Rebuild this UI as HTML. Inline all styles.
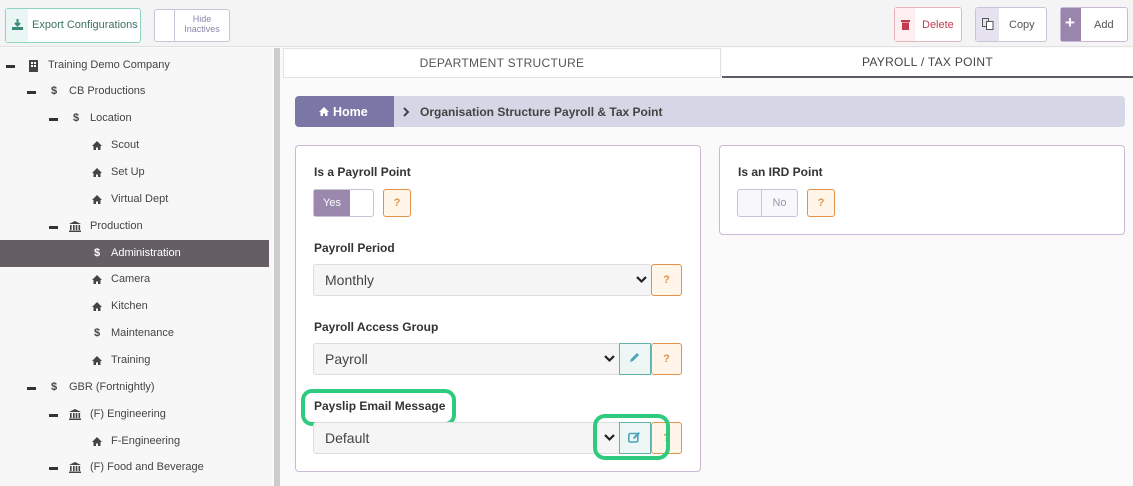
<!DOCTYPE html>
<html><head><meta charset="utf-8"><style>
*{box-sizing:border-box;margin:0;padding:0}
body{width:1133px;height:486px;overflow:hidden;background:#fafafa;font-family:"Liberation Sans",sans-serif;color:#333;position:relative}
.a{position:absolute}
.t{font-size:11px;color:#444;white-space:nowrap}
.lbl{font-size:12px;font-weight:bold;color:#333}
.btn{position:absolute;border-radius:3px;background:#fff}
.q{position:absolute;width:28px;height:28px;border:1px solid #e0924a;background:#fff5e8;border-radius:3px;color:#e0924a;font-weight:bold;font-size:11px;text-align:center;line-height:26px}
.sel{position:absolute;height:32px;border:1px solid #ddd;background:#f5f5f5;border-radius:3px;font-size:14px;color:#444;padding-left:11px;line-height:30px}
.minus{position:absolute;width:9px;height:2.5px;background:#333}
</style></head><body>
<div class="a" style="left:0;top:0;width:1133px;height:47px;background:#f4f4f4;border-bottom:1px solid #e2e2e2"></div>
<div class="btn" style="left:5px;top:8px;width:136px;height:35px;border:1px solid #8fd3c4">
 <div class="a" style="left:0;top:0;width:22px;height:33px;background:#e9f6f3"></div>
 <svg class="a" style="left:6px;top:10px" width="11" height="11" viewBox="0 0 11 11"><path d="M5.5 0v6M3 4l2.5 2.5L8 4" stroke="#3a8a78" stroke-width="2" fill="none"/><rect x="0" y="8" width="11" height="3" fill="#3a8a78"/></svg>
 <div class="a" style="left:26px;top:10px;font-size:11px;color:#3a7266">Export Configurations</div>
</div>
<div class="btn" style="left:154px;top:9px;width:76px;height:33px;border:1px solid #c9c3d6">
 <div class="a" style="left:19px;top:0;width:1px;height:31px;background:#c9c3d6"></div>
 <div class="a" style="left:20px;top:4px;width:54px;text-align:center;font-size:9px;line-height:10px;color:#8a86a8">Hide<br>Inactives</div>
</div>
<div class="btn" style="left:894px;top:7px;width:68px;height:35px;border:1px solid #e8b4bc">
 <div class="a" style="left:0;top:0;width:20px;height:33px;background:#fdeef0"></div>
 <svg class="a" style="left:6px;top:11px" width="9" height="11" viewBox="0 0 9 11"><rect x="0" y="1" width="9" height="2" fill="#c23b4f"/><rect x="1" y="3.5" width="7" height="7.5" fill="#c23b4f"/></svg>
 <div class="a" style="left:27px;top:11px;font-size:11px;color:#c23b4f">Delete</div>
</div>
<div class="btn" style="left:975px;top:7px;width:72px;height:35px;border:1px solid #c9c3d6">
 <div class="a" style="left:0;top:0;width:23px;height:33px;background:#e6e2f0"></div>
 <svg class="a" style="left:6px;top:10px" width="12" height="12" viewBox="0 0 12 12"><rect x="0.5" y="0.5" width="6" height="8" fill="none" stroke="#555" /><rect x="4.5" y="3.5" width="6.5" height="8" fill="#fff" stroke="#555"/></svg>
 <div class="a" style="left:33px;top:11px;font-size:11px;color:#555">Copy</div>
</div>
<div class="btn" style="left:1060px;top:7px;width:68px;height:35px;border:1px solid #c9b8d6">
 <div class="a" style="left:0;top:0;width:20px;height:33px;background:#9a86ad"></div>
 <div class="a" style="left:4px;top:5px;color:#fff;font-weight:bold;font-size:17px">+</div>
 <div class="a" style="left:33px;top:11px;font-size:11px;color:#555">Add</div>
</div>
<div class="a" style="left:0;top:48px;width:272px;height:438px;background:#f7f7f7"></div>
<div class="a" style="left:274px;top:48px;width:6px;height:438px;background:#cdcdcd"></div>
<div class="a" style="left:0;top:240px;width:269px;height:27px;background:#655f64"></div>
<div class="minus" style="left:6px;top:65px"></div>
<svg class="a" style="left:29px;top:60px" width="9" height="12" viewBox="0 0 9 12"><rect width="9" height="12" fill="#444"/><rect x="2" y="2" width="2" height="2" fill="#fff"/><rect x="5" y="2" width="2" height="2" fill="#fff"/><rect x="2" y="5" width="2" height="2" fill="#fff"/><rect x="5" y="5" width="2" height="2" fill="#fff"/></svg>
<div class="a t" style="left:48px;top:59px">Training Demo Company</div>
<div class="minus" style="left:27px;top:91px"></div><div class="a t" style="left:51px;top:85px;font-weight:bold">$</div><div class="a t" style="left:69px;top:85px">CB Productions</div>
<div class="minus" style="left:49px;top:118px"></div><div class="a t" style="left:73px;top:112px;font-weight:bold">$</div><div class="a t" style="left:90px;top:112px">Location</div>
<div class="minus" style="left:49px;top:226px"></div>
<svg class="a" style="left:69px;top:221px" width="12" height="11" viewBox="0 0 12 11"><path d="M0 3L6 0l6 3z" fill="#444"/><rect x="1" y="4" width="1.6" height="5" fill="#444"/><rect x="4" y="4" width="1.6" height="5" fill="#444"/><rect x="6.7" y="4" width="1.6" height="5" fill="#444"/><rect x="9.5" y="4" width="1.6" height="5" fill="#444"/><rect x="0" y="9.5" width="12" height="1.5" fill="#444"/></svg>
<div class="a t" style="left:90px;top:220px">Production</div>
<div class="a t" style="left:94px;top:247px;font-weight:bold;color:#fff">$</div><div class="a t" style="left:111px;top:247px;color:#fff">Administration</div>
<div class="a t" style="left:94px;top:327px;font-weight:bold">$</div><div class="a t" style="left:111px;top:327px">Maintenance</div>
<div class="minus" style="left:27px;top:387px"></div><div class="a t" style="left:51px;top:381px;font-weight:bold">$</div><div class="a t" style="left:69px;top:381px">GBR (Fortnightly)</div>
<div class="minus" style="left:49px;top:414px"></div>
<svg class="a" style="left:69px;top:409px" width="12" height="11" viewBox="0 0 12 11"><path d="M0 3L6 0l6 3z" fill="#444"/><rect x="1" y="4" width="1.6" height="5" fill="#444"/><rect x="4" y="4" width="1.6" height="5" fill="#444"/><rect x="6.7" y="4" width="1.6" height="5" fill="#444"/><rect x="9.5" y="4" width="1.6" height="5" fill="#444"/><rect x="0" y="9.5" width="12" height="1.5" fill="#444"/></svg>
<div class="a t" style="left:90px;top:408px">(F) Engineering</div>
<div class="minus" style="left:49px;top:467px"></div>
<svg class="a" style="left:69px;top:462px" width="12" height="11" viewBox="0 0 12 11"><path d="M0 3L6 0l6 3z" fill="#444"/><rect x="1" y="4" width="1.6" height="5" fill="#444"/><rect x="4" y="4" width="1.6" height="5" fill="#444"/><rect x="6.7" y="4" width="1.6" height="5" fill="#444"/><rect x="9.5" y="4" width="1.6" height="5" fill="#444"/><rect x="0" y="9.5" width="12" height="1.5" fill="#444"/></svg>
<div class="a t" style="left:90px;top:461px">(F) Food and Beverage</div>
<svg width="0" height="0" style="position:absolute"><defs><g id="h"><path d="M0 5L5 0l5 5H8.5v4H6V6.5H4V9H1.5V5z" fill="#444"/></g></defs></svg>
<svg class="a" style="left:92px;top:141px" width="10" height="9"><use href="#h"/></svg><div class="a t" style="left:111px;top:139px">Scout</div>
<svg class="a" style="left:92px;top:168px" width="10" height="9"><use href="#h"/></svg><div class="a t" style="left:111px;top:166px">Set Up</div>
<svg class="a" style="left:92px;top:195px" width="10" height="9"><use href="#h"/></svg><div class="a t" style="left:111px;top:193px">Virtual Dept</div>
<svg class="a" style="left:92px;top:275px" width="10" height="9"><use href="#h"/></svg><div class="a t" style="left:111px;top:273px">Camera</div>
<svg class="a" style="left:92px;top:302px" width="10" height="9"><use href="#h"/></svg><div class="a t" style="left:111px;top:300px">Kitchen</div>
<svg class="a" style="left:92px;top:356px" width="10" height="9"><use href="#h"/></svg><div class="a t" style="left:111px;top:354px">Training</div>
<svg class="a" style="left:92px;top:437px" width="10" height="9"><use href="#h"/></svg><div class="a t" style="left:111px;top:435px">F-Engineering</div>
<div class="a" style="left:283px;top:48px;width:438px;height:30px;background:#fff;border:1px solid #e2e2e2;font-size:12px;color:#555;text-align:center;line-height:29px;letter-spacing:.3px">DEPARTMENT STRUCTURE</div>
<div class="a" style="left:722px;top:48px;width:411px;height:30px;background:#fff;border-bottom:2px solid #5f5b68;font-size:12px;color:#444;text-align:center;line-height:29px;letter-spacing:.3px">PAYROLL / TAX POINT</div>
<div class="a" style="left:295px;top:96px;width:830px;height:31px;background:#d6d6e6;border-radius:4px"></div>
<div class="a" style="left:295px;top:96px;width:99px;height:31px;background:#7a77a7;border-radius:4px 0 0 4px"></div>
<svg class="a" style="left:319px;top:107px" width="10" height="9"><path d="M0 5L5 0l5 5H8.5v4H6V6.5H4V9H1.5V5z" fill="#fff"/></svg>
<div class="a" style="left:333px;top:105px;font-size:12.5px;font-weight:bold;color:#fff">Home</div>
<svg class="a" style="left:403px;top:107px" width="7" height="10"><path d="M1 1l4 4-4 4" stroke="#444" stroke-width="2" fill="none"/></svg>
<div class="a" style="left:420px;top:105px;font-size:12px;font-weight:bold;color:#444">Organisation Structure Payroll &amp; Tax Point</div>
<div class="a" style="left:295px;top:145px;width:406px;height:327px;background:#fff;border:1px solid #c9b8d6;border-radius:4px"></div>
<div class="a lbl" style="left:314px;top:165px">Is a Payroll Point</div>
<div class="a" style="left:313px;top:189px;width:61px;height:28px;border:1px solid #c9c3d6;border-radius:3px;background:#fff">
 <div class="a" style="left:0;top:0;width:36px;height:26px;background:#9a88ad;color:#fff;font-size:11px;text-align:center;line-height:26px">Yes</div></div>
<div class="q" style="left:383px;top:189px">?</div>
<div class="a lbl" style="left:314px;top:241px">Payroll Period</div>
<div class="sel" style="left:313px;top:264px;width:339px">Monthly</div>
<svg class="a" style="left:636px;top:276px" width="11" height="8"><path d="M1 1l4.5 4.5L10 1" stroke="#222" stroke-width="2.2" fill="none"/></svg>
<div class="q" style="left:651px;top:264px;width:31px;height:32px;line-height:30px">?</div>
<div class="a lbl" style="left:314px;top:320px">Payroll Access Group</div>
<div class="sel" style="left:313px;top:343px;width:307px">Payroll</div>
<svg class="a" style="left:604px;top:355px" width="11" height="8"><path d="M1 1l4.5 4.5L10 1" stroke="#222" stroke-width="2.2" fill="none"/></svg>
<div class="a" style="left:619px;top:343px;width:32px;height:32px;border:1px solid #5fb3a8;background:#edf6f5"></div>
<svg class="a" style="left:628px;top:352px" width="12" height="12"><path d="M2 10l1-3 6-6 2 2-6 6z" fill="#4aa3b8"/></svg>
<div class="q" style="left:651px;top:343px;width:31px;height:32px;line-height:30px">?</div>
<div class="a lbl" style="left:314px;top:399px">Payslip Email Message</div>
<div class="a" style="left:301px;top:389px;width:155px;height:37px;border:4px solid #2ecb7f;border-radius:11px"></div>
<div class="sel" style="left:313px;top:422px;width:307px">Default</div>
<svg class="a" style="left:604px;top:434px" width="11" height="8"><path d="M1 1l4.5 4.5L10 1" stroke="#222" stroke-width="2.2" fill="none"/></svg>
<div class="a" style="left:619px;top:422px;width:32px;height:32px;border:1px solid #5fb3a8;background:#edf6f5"></div>
<svg class="a" style="left:628px;top:431px" width="13" height="12"><rect x="0.8" y="2.5" width="9" height="8.5" rx="1.5" fill="none" stroke="#4aa3b8" stroke-width="1.6"/><path d="M5 8l.5-2 5-5 1.5 1.5-5 5z" fill="#4aa3b8"/></svg>
<div class="q" style="left:651px;top:422px;width:31px;height:32px;line-height:30px">?</div>
<div class="a" style="left:593px;top:414px;width:77px;height:46px;border:4px solid #2ecb7f;border-radius:12px"></div>
<div class="a" style="left:719px;top:145px;width:406px;height:90px;background:#fff;border:1px solid #c9b8d6;border-radius:4px"></div>
<div class="a lbl" style="left:738px;top:165px">Is an IRD Point</div>
<div class="a" style="left:737px;top:189px;width:61px;height:28px;border:1px solid #c9c3d6;border-radius:3px;background:#f8f8fc">
 <div class="a" style="left:23px;top:0;width:1px;height:26px;background:#c9c3d6"></div>
 <div class="a" style="left:24px;top:0;width:35px;height:26px;color:#9a96b0;font-size:11px;text-align:center;line-height:26px">No</div></div>
<div class="q" style="left:807px;top:189px">?</div>
</body></html>
